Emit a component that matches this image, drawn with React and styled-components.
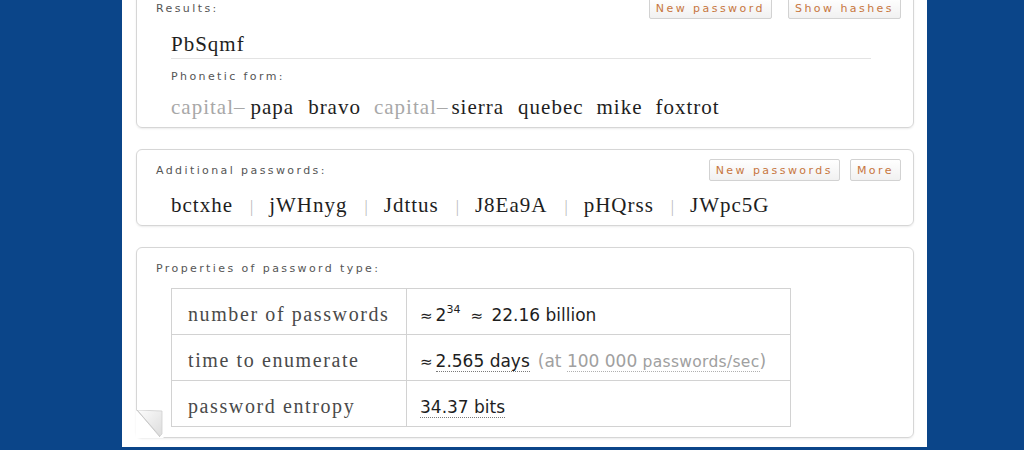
import React from 'react'
import styled, { createGlobalStyle } from 'styled-components'

const GlobalStyle = createGlobalStyle`
  html, body {
    margin: 0;
    padding: 0;
    background: #0b4589;
    overflow: hidden;
  }
`

const Page = styled.div`
  width: 805px;
  margin: -13px 0 0 122px;
  padding: 0 13px 9px 14px;
  box-sizing: border-box;
  background: #fff;
  display: flex;
  flex-direction: column;
  gap: 21px;
`

const Pod = styled.div`
  position: relative;
  border: 1px solid #d6d6d6;
  border-radius: 6px;
  box-shadow: 0 1px 2px rgba(0, 0, 0, 0.08);
  padding: 9px 12px ${p => p.$bottom || 6}px 19px;
`

const PodHeader = styled.div`
  display: flex;
  align-items: center;
  justify-content: space-between;
  height: 22px;
`

const Label = styled.div`
  font-family: "DejaVu Sans", Verdana, sans-serif;
  font-size: 11px;
  letter-spacing: 2.4px;
  color: #555;
`

const Buttons = styled.div`
  display: flex;
  gap: ${p => p.$gap}px;
`

const Button = styled.button`
  height: 22px;
  padding: 0 6px;
  border: 1px solid #d2d2d2;
  border-radius: 2px;
  background: linear-gradient(#fff, #f1f1f1);
  font-family: "DejaVu Sans", Verdana, sans-serif;
  font-size: 11px;
  letter-spacing: 2.45px;
  color: #c77640;
  cursor: pointer;
`

const Content = styled.div`
  padding-left: 15px;
  margin-top: ${p => p.$top || 0}px;
  font-family: "Liberation Serif", "DejaVu Serif", serif;
  font-size: 21px;
  letter-spacing: 1px;
  line-height: 26px;
  color: #1e1e1e;
`

const Divider = styled.div`
  height: 1px;
  background: #e3e3e3;
  margin: 1px 30px 7px 15px;
`

const SubLabel = styled(Label)`
  padding-left: 15px;
  line-height: 22px;
`

const Word = styled.span`
  margin-right: ${p => p.$gap}px;
  color: ${p => (p.$muted ? '#a8a8a8' : '#1e1e1e')};
`

const Sep = styled.span`
  color: #b8b8b8;
  font-size: 16px;
  margin: 0 15px 0 17px;
`

const Table = styled.table`
  margin: 9px 0 0 15px;
  width: 620px;
  border-collapse: collapse;
  border: 1px solid #d2d2d2;
`

const Cell = styled.td`
  box-sizing: border-box;
  height: 46px;
  width: ${p => (p.$key ? '235px' : 'auto')};
  padding: 6px 0 0 ${p => (p.$key ? 16 : 13)}px;
  border: 1px solid #d2d2d2;
  white-space: nowrap;
  font-family: ${p => (p.$key ? '"Liberation Serif", "DejaVu Serif", serif' : '"DejaVu Sans", sans-serif')};
  font-size: ${p => (p.$key ? '20px' : '17px')};
  letter-spacing: ${p => (p.$key ? '1.6px' : '0')};
  color: ${p => (p.$key ? '#4a4a4a' : '#1e1e1e')};
`

const Approx = styled.span`
  font-size: 15px;
  margin-right: 3px;
`

const Sup = styled.sup`
  font-size: 11px;
  vertical-align: 8px;
  line-height: 0;
  margin-right: 10px;
`

const Dotted = styled.span`
  border-bottom: 1px dotted #7a7a7a;
`

const Note = styled.span`
  color: #a0a0a0;
  font-size: 17px;
  margin-left: 8px;
`

const NoteLink = styled.span`
  border-bottom: 1px dotted #b0b0b0;
  small {
    font-size: 15.5px;
    letter-spacing: 0.3px;
  }
`

const Curl = styled.svg`
  position: absolute;
  left: -1px;
  bottom: -1px;
`

const phonetic = [
  ['capital–', true, 5],
  ['papa', false, 14],
  ['bravo', false, 13],
  ['capital–', true, 3],
  ['sierra', false, 14],
  ['quebec', false, 13],
  ['mike', false, 13],
  ['foxtrot', false, 0],
]

const extra = ['bctxhe', 'jWHnyg', 'Jdttus', 'J8Ea9A', 'pHQrss', 'JWpc5G']

export default function App() {
  return (
    <>
      <GlobalStyle />
      <Page>
        <Pod $bottom={7}>
          <PodHeader>
            <Label>Results:</Label>
            <Buttons $gap={16}>
              <Button>New password</Button>
              <Button>Show hashes</Button>
            </Buttons>
          </PodHeader>
          <Content $top={12}>PbSqmf</Content>
          <Divider />
          <SubLabel>Phonetic form:</SubLabel>
          <Content $top={6}>
            {phonetic.map(([w, muted, gap], i) => (
              <Word key={i} $muted={muted} $gap={gap}>{w}</Word>
            ))}
          </Content>
        </Pod>

        <Pod $bottom={5}>
          <PodHeader>
            <Label>Additional passwords:</Label>
            <Buttons $gap={10}>
              <Button>New passwords</Button>
              <Button>More</Button>
            </Buttons>
          </PodHeader>
          <Content $top={11}>
            {extra.map((w, i) => (
              <React.Fragment key={w}>
                {i > 0 && <Sep>|</Sep>}
                {w}
              </React.Fragment>
            ))}
          </Content>
        </Pod>

        <Pod $bottom={10}>
          <PodHeader>
            <Label>Properties of password type:</Label>
          </PodHeader>
          <Table>
            <tbody>
              <tr>
                <Cell $key>number of passwords</Cell>
                <Cell>
                  <Approx>≈</Approx>2<Sup>34</Sup><Approx>≈</Approx> 22.16 billion
                </Cell>
              </tr>
              <tr>
                <Cell $key>time to enumerate</Cell>
                <Cell>
                  <Approx>≈</Approx><Dotted>2.565 days</Dotted>
                  <Note>
                    (at <NoteLink>100 000 <small>passwords/sec</small></NoteLink>)
                  </Note>
                </Cell>
              </tr>
              <tr>
                <Cell $key>password entropy</Cell>
                <Cell>
                  <Dotted>34.37 bits</Dotted>
                </Cell>
              </tr>
            </tbody>
          </Table>
          <Curl width="28" height="28" viewBox="0 0 28 28">
            <defs>
              <linearGradient id="flap" x1="0" y1="0" x2="1" y2="1">
                <stop offset="0" stopColor="#fdfdfd" />
                <stop offset="1" stopColor="#dcdcdc" />
              </linearGradient>
            </defs>
            <polygon points="0,0 0,28 28,28" fill="#fff" />
            <polygon points="1,0 26,1 26,24 24,26" fill="url(#flap)" stroke="#cfcfcf" strokeWidth="0.8" />
            <line x1="1" y1="0" x2="24" y2="27" stroke="#c8c8c8" strokeWidth="1" />
          </Curl>
        </Pod>
      </Page>
    </>
  )
}
